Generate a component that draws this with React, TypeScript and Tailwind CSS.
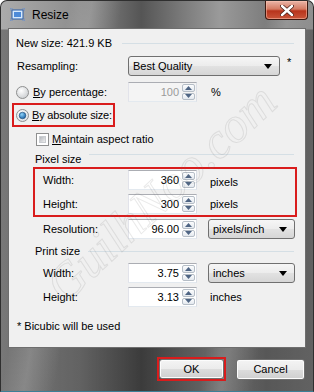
import React from "react";

const font = "font-['Liberation_Sans',Arial,sans-serif]";

function SpinArrows() {
  return (
    <div className="flex flex-col gap-px h-full py-px pr-px w-[14px]">
      {[0, 1].map((i) => (
        <div
          key={i}
          className="flex-1 flex items-center justify-center border border-[#b5bdc6] rounded-[2px] bg-[linear-gradient(#fcfdfe,#e4e9ef)]"
        >
          <svg width="7" height="4" viewBox="0 0 7 4">
            {i === 0 ? (
              <path d="M0 4 L3.5 0 L7 4 Z" fill="#4f6584" />
            ) : (
              <path d="M0 0 L3.5 4 L7 0 Z" fill="#4f6584" />
            )}
          </svg>
        </div>
      ))}
    </div>
  );
}

function Spin({ value, disabled }: { value: string; disabled?: boolean }) {
  return (
    <div
      className={`flex h-[20px] w-[69px] border border-[#abadb3] border-b-[#e3e9ef] border-l-[#e2e3ea] border-r-[#dbdfe6] ${
        disabled ? "bg-[#f4f4f4] text-[#9a9a9a]" : "bg-white text-black"
      }`}
    >
      <div className="flex-1 flex items-center justify-end pr-[3px]">{value}</div>
      <SpinArrows />
    </div>
  );
}

function Select({ value, width }: { value: string; width: string }) {
  return (
    <div
      className={`${width} h-[20px] flex items-center pl-[4px] pr-[7px] border border-[#707070] rounded-[3px] bg-[linear-gradient(#f6f6f6,#ececec_50%,#e2e2e2_50%,#d6d6d6)]`}
    >
      <span className="flex-1">{value}</span>
      <svg width="8" height="5" viewBox="0 0 8 5">
        <path d="M0 0 L8 0 L4 5 Z" fill="#000" />
      </svg>
    </div>
  );
}

function Radio({ checked }: { checked?: boolean }) {
  return (
    <svg width="13" height="13" viewBox="0 0 13 13" className="shrink-0">
      <defs>
        <radialGradient id={checked ? "rc" : "ru"} cx="0.4" cy="0.35" r="0.7">
          <stop offset="0" stopColor="#ffffff" />
          <stop offset="1" stopColor={checked ? "#d8dde3" : "#c9cccf"} />
        </radialGradient>
        <radialGradient id="dot" cx="0.4" cy="0.35" r="0.7">
          <stop offset="0" stopColor="#8fd4fa" />
          <stop offset="1" stopColor="#125aa0" />
        </radialGradient>
      </defs>
      <circle cx="6.5" cy="6.5" r="6" fill={`url(#${checked ? "rc" : "ru"})`} stroke="#8e8f8f" />
      {checked && <circle cx="6.5" cy="6.5" r="3.3" fill="url(#dot)" stroke="#1d4a75" strokeWidth="0.6" />}
    </svg>
  );
}

function Check() {
  return (
    <div className="w-[13px] h-[13px] shrink-0 border border-[#8e8f8f] bg-white p-[2px]">
      <div className="w-full h-full bg-[linear-gradient(135deg,#b4b8bd,#eeeeee)] border border-[#c9ccd0]" />
    </div>
  );
}

function Btn({ label }: { label: string }) {
  return (
    <div className="w-full h-full flex items-center justify-center border border-[#707070] rounded-[3px] bg-[linear-gradient(#f4f4f4,#ebebeb_50%,#dddddd_50%,#cfcfcf)] shadow-[inset_0_0_0_1px_#fcfcfc]">
      {label}
    </div>
  );
}

export default function App() {
  return (
    <div
      className={`${font} relative w-[314px] h-[392px] overflow-hidden whitespace-nowrap rounded-t-[7px] border border-[#2f2f2f] border-b-[#3d7f96] text-[11px] text-black flex flex-col bg-[linear-gradient(100deg,transparent_18%,rgba(255,255,255,0.16)_24%,transparent_32%,transparent_70%,rgba(255,255,255,0.14)_76%,transparent_84%),linear-gradient(180deg,rgba(0,0,0,0)_0px,rgba(0,0,0,0)_28px,rgba(0,0,0,0.3)_29px),linear-gradient(90deg,#ababab_0%,#8d8d8d_25%,#555555_45%,#7a7a7a_58%,#9a9a9a_70%,#7d7d7d_85%,#8c8c8c_100%)]`}
    >
      {/* title bar */}
      <div className="h-[27px] flex items-start shrink-0">
        <div className="flex items-center h-[23px] pl-[9px] pt-[4px]">
          <svg width="15" height="13" viewBox="0 0 15 13">
            <rect x="2" y="2" width="11" height="9" fill="#d7e9fb" stroke="#2d5fa8" />
            <rect x="4" y="4" width="7" height="5" fill="#4d8ad8" />
            <path d="M0 0h3M0 0v3M12 0h3M15 0v3M0 13h3M0 10v3M12 13h3M15 10v3" stroke="#6a8fc8" strokeWidth="1" />
          </svg>
          <span className="ml-[7px] text-[12px] text-black">Resize</span>
        </div>
        <div className="ml-auto mr-[5px] w-[43px] h-[19px] rounded-b-[4px] border border-t-0 border-[#3b1810] flex items-center justify-center bg-[linear-gradient(#eab5a8,#d47a62_45%,#b8341c_55%,#c9553a)] shadow-[inset_0_0_0_1px_rgba(255,200,180,0.5)]">
          <svg width="14" height="11" viewBox="0 0 14 11">
            <path d="M2 1 L12 10 M12 1 L2 10" stroke="#4a2018" strokeWidth="4" strokeLinecap="round" />
            <path d="M2 1 L12 10 M12 1 L2 10" stroke="#ffffff" strokeWidth="2.4" strokeLinecap="round" />
          </svg>
        </div>
      </div>

      {/* client area */}
      <div className="mx-[7px] h-[320px] border border-[#6e6e6e] bg-[#f0f0f0] flex flex-col shrink-0">
        <div className="mt-[7px] h-[15px] flex items-center pl-[7px] pr-[11px]">
          <span>New size: 421.9 KB</span>
          <div className="flex-1 ml-[10px] h-px bg-[#d5dfe5]" />
        </div>

        <div className="mt-[5px] h-[20px] flex items-center pl-[8px]">
          <span className="w-[111px]">Resampling:</span>
          <Select value="Best Quality" width="w-[152px]" />
          <span className="ml-[7px] self-start -mt-[2px]">*</span>
        </div>

        <div className="mt-[6px] h-[20px] flex items-center pl-[7px]">
          <div className="w-[112px] flex items-center gap-[4px]">
            <Radio />
            <span className="underline-offset-1">
              <u>B</u>y percentage:
            </span>
          </div>
          <Spin value="100" disabled />
          <span className="ml-[14px]">%</span>
        </div>

        <div className="mt-px ml-[3px] w-[103px] h-[24px] border-2 border-[#d91c1c] flex items-center pl-[2px] gap-[3px]">
          <Radio checked />
          <span className="tracking-[-0.2px]">
            <u>B</u>y absolute size:
          </span>
        </div>

        <div className="mt-[5px] h-[14px] flex items-center pl-[27px] gap-[3px]">
          <Check />
          <span>
            <u>M</u>aintain aspect ratio
          </span>
        </div>

        <div className="mt-[6px] h-[15px] flex items-center pl-[26px] pr-[11px]">
          <span>Pixel size</span>
          <div className="flex-1 ml-[8px] h-px bg-[#d5dfe5] -mt-[10px]" />
        </div>

        <div className="ml-[24px] w-[264px] h-[50px] border-2 border-[#d91c1c] flex flex-col pt-px gap-[4px]">
          <div className="h-[20px] flex items-center pl-[8px]">
            <span className="w-[85px]">Width:</span>
            <Spin value="360" />
            <span className="ml-[13px] mt-[4px]">pixels</span>
          </div>
          <div className="h-[20px] flex items-center pl-[8px]">
            <span className="w-[85px]">Height:</span>
            <Spin value="300" />
            <span className="ml-[13px]">pixels</span>
          </div>
        </div>

        <div className="mt-[2px] h-[20px] flex items-center pl-[34px]">
          <span className="w-[85px]">Resolution:</span>
          <Spin value="96.00" />
          <div className="ml-[11px]">
            <Select value="pixels/inch" width="w-[87px]" />
          </div>
        </div>

        <div className="mt-[5px] h-[15px] flex items-center pl-[26px] pr-[11px]">
          <span>Print size</span>
          <div className="flex-1 ml-[8px] h-px bg-[#d5dfe5]" />
        </div>

        <div className="mt-[4px] h-[20px] flex items-center pl-[34px]">
          <span className="w-[85px]">Width:</span>
          <Spin value="3.75" />
          <div className="ml-[11px]">
            <Select value="inches" width="w-[87px]" />
          </div>
        </div>

        <div className="mt-[4px] h-[20px] flex items-center pl-[34px]">
          <span className="w-[85px]">Height:</span>
          <Spin value="3.13" />
          <span className="ml-[13px]">inches</span>
        </div>

        <div className="mt-[12px] h-[15px] flex items-center pl-[8px]">
          <span>* Bicubic will be used</span>
        </div>
      </div>

      {/* buttons */}
      <div className="mt-[9px] flex items-center justify-end gap-[10px] pr-[8px]">
        <div className="w-[69px] h-[24px] border-2 border-[#d91c1c]">
          <Btn label="OK" />
        </div>
        <div className="w-[69px] h-[21px]">
          <Btn label="Cancel" />
        </div>
      </div>

      {/* watermark */}
      <div className="pointer-events-none absolute left-[160px] top-[192px] -translate-x-1/2 -translate-y-1/2 -rotate-[43deg] font-['Liberation_Serif',serif] italic text-[50px] whitespace-nowrap text-transparent [-webkit-text-stroke:1px_rgba(120,120,120,0.16)]">
        GuilhNoo.com
      </div>
    </div>
  );
}
